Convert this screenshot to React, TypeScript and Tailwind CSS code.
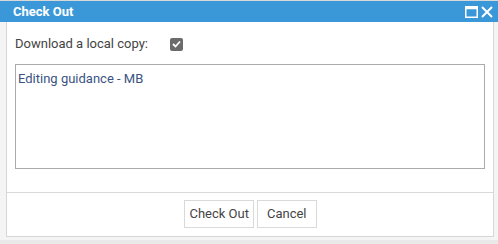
export default function App() {
  return (
    <div className="w-[498px] h-[244px] bg-[#e9e9e9] relative" style={{ fontFamily: "Roboto, 'Liberation Sans', sans-serif" }}>
      <div className="w-[498px] h-[240px] bg-[#f4f4f4] flex flex-col border-t border-[#d8d8d8]">
        <div className="h-[21px] bg-[#3a98d9] flex items-center justify-between pl-[13px] pr-[5px]">
          <span className="text-white font-bold text-[13px] leading-none">Check Out</span>
          <div className="flex items-center gap-[3px]">
            <svg width="13" height="12" viewBox="0 0 13 12">
              <rect x="0.75" y="0.75" width="11.5" height="10.5" fill="none" stroke="#fff" strokeWidth="1.5" />
              <rect x="0.75" y="0.75" width="11.5" height="2.5" fill="#fff" />
            </svg>
            <svg width="12" height="12" viewBox="0 0 12 12">
              <path d="M1 1 L11 11 M11 1 L1 11" stroke="#fff" strokeWidth="2" />
            </svg>
          </div>
        </div>
        <div className="ml-[6px] mr-[4px] h-[215px] bg-white border-x border-b border-[#d6d6d6] flex flex-col">
          <div className="flex-1 px-[8px] pt-[14px]">
            <div className="flex items-center h-[16px]">
              <span className="text-[13px] text-[#444] w-[155px]">Download a local copy:</span>
              <div className="w-[13px] h-[13px] bg-[#6b6b6b] rounded-[2px] flex items-center justify-center">
                <svg width="9" height="8" viewBox="0 0 9 8">
                  <path d="M1 4 L3.5 6.5 L8 1.5" stroke="#fff" strokeWidth="1.8" fill="none" />
                </svg>
              </div>
            </div>
            <div className="mt-[12px] h-[105px] border border-[#ababab] px-[2px] pt-[1px]">
              <span className="text-[13px] text-[#3a5383]">Editing guidance - MB</span>
            </div>
          </div>
          <div className="h-[44px] border-t border-[#d9d9d9] flex justify-center items-start pt-[7px] gap-[3px] pl-[1px]">
            <button className="h-[28px] px-[4px] border border-[#d9d9d9] bg-white text-[13px] text-[#444]">Check Out</button>
            <button className="h-[28px] px-[9px] border border-[#d9d9d9] bg-white text-[13px] text-[#444]">Cancel</button>
          </div>
        </div>
      </div>
    </div>
  );
}
